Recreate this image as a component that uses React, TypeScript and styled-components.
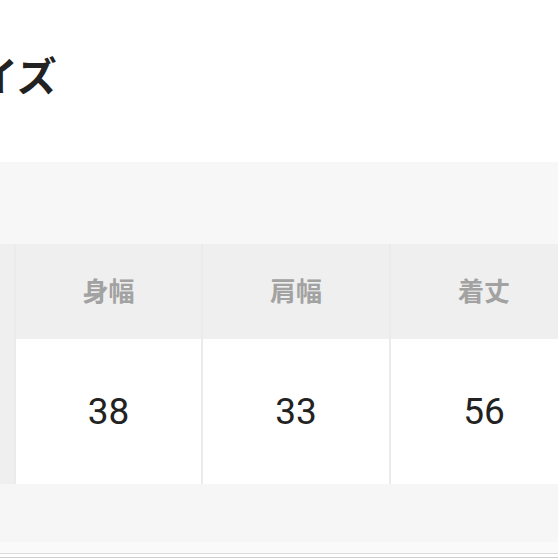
import React from "react";
import styled, { createGlobalStyle } from "styled-components";

const GlobalStyle = createGlobalStyle`
  html, body {
    margin: 0;
    padding: 0;
    background: #ffffff;
  }
  body {
    font-family: "Noto Sans CJK JP", "Liberation Sans", sans-serif;
    width: 558px;
    height: 558px;
    overflow: hidden;
  }
`;

const Page = styled.div`
  width: 558px;
  height: 558px;
  display: flex;
  flex-direction: column;
  overflow: hidden;
`;

const TitleArea = styled.div`
  height: 162px;
  background: #ffffff;
  display: flex;
  align-items: flex-start;
`;

const Title = styled.h2`
  margin: 48px 0 0 -62px;
  font-size: 40px;
  line-height: 52px;
  font-weight: 600;
  color: #222222;
  white-space: nowrap;
`;

const Band = styled.div`
  height: 82px;
  background: #f7f7f7;
`;

const Table = styled.div`
  display: grid;
  grid-template-columns: 170px 185px 186px 186px;
  column-gap: 2px;
  margin-left: -156px;
  background: #ebebeb;
`;

const HeadCell = styled.div`
  height: 95px;
  background: #efefef;
  display: flex;
  align-items: center;
  justify-content: center;
  font-size: 26px;
  font-weight: 600;
  color: #a2a2a2;
  padding-bottom: 4px;
  box-sizing: border-box;
`;

const DataCell = styled.div<{ $label?: boolean }>`
  height: 145px;
  background: ${(p) => (p.$label ? "#efefef" : "#ffffff")};
  display: flex;
  align-items: center;
  justify-content: center;
  font-family: "Roboto", "Liberation Sans", sans-serif;
  font-size: 37px;
  color: #222222;
`;

const Footer = styled.div`
  height: 58px;
  background: #f6f6f6;
`;

const FooterEdge = styled.div`
  height: 11px;
  background: #fafafa;
  border-bottom: 1px solid #dddddd;
`;

const BottomStrip = styled.div`
  height: 3px;
  background: #ffffff;
  border-bottom: 1px solid #cfcfcf;
`;

const columns = [
  { label: "身幅", value: "38" },
  { label: "肩幅", value: "33" },
  { label: "着丈", value: "56" },
];

export default function App() {
  return (
    <Page>
      <GlobalStyle />
      <TitleArea>
        <Title>サイズ</Title>
      </TitleArea>
      <Band />
      <Table>
        <HeadCell />
        {columns.map((c) => (
          <HeadCell key={c.label}>{c.label}</HeadCell>
        ))}
        <DataCell $label />
        {columns.map((c) => (
          <DataCell key={c.label}>{c.value}</DataCell>
        ))}
      </Table>
      <Footer />
      <FooterEdge />
      <BottomStrip />
    </Page>
  );
}
